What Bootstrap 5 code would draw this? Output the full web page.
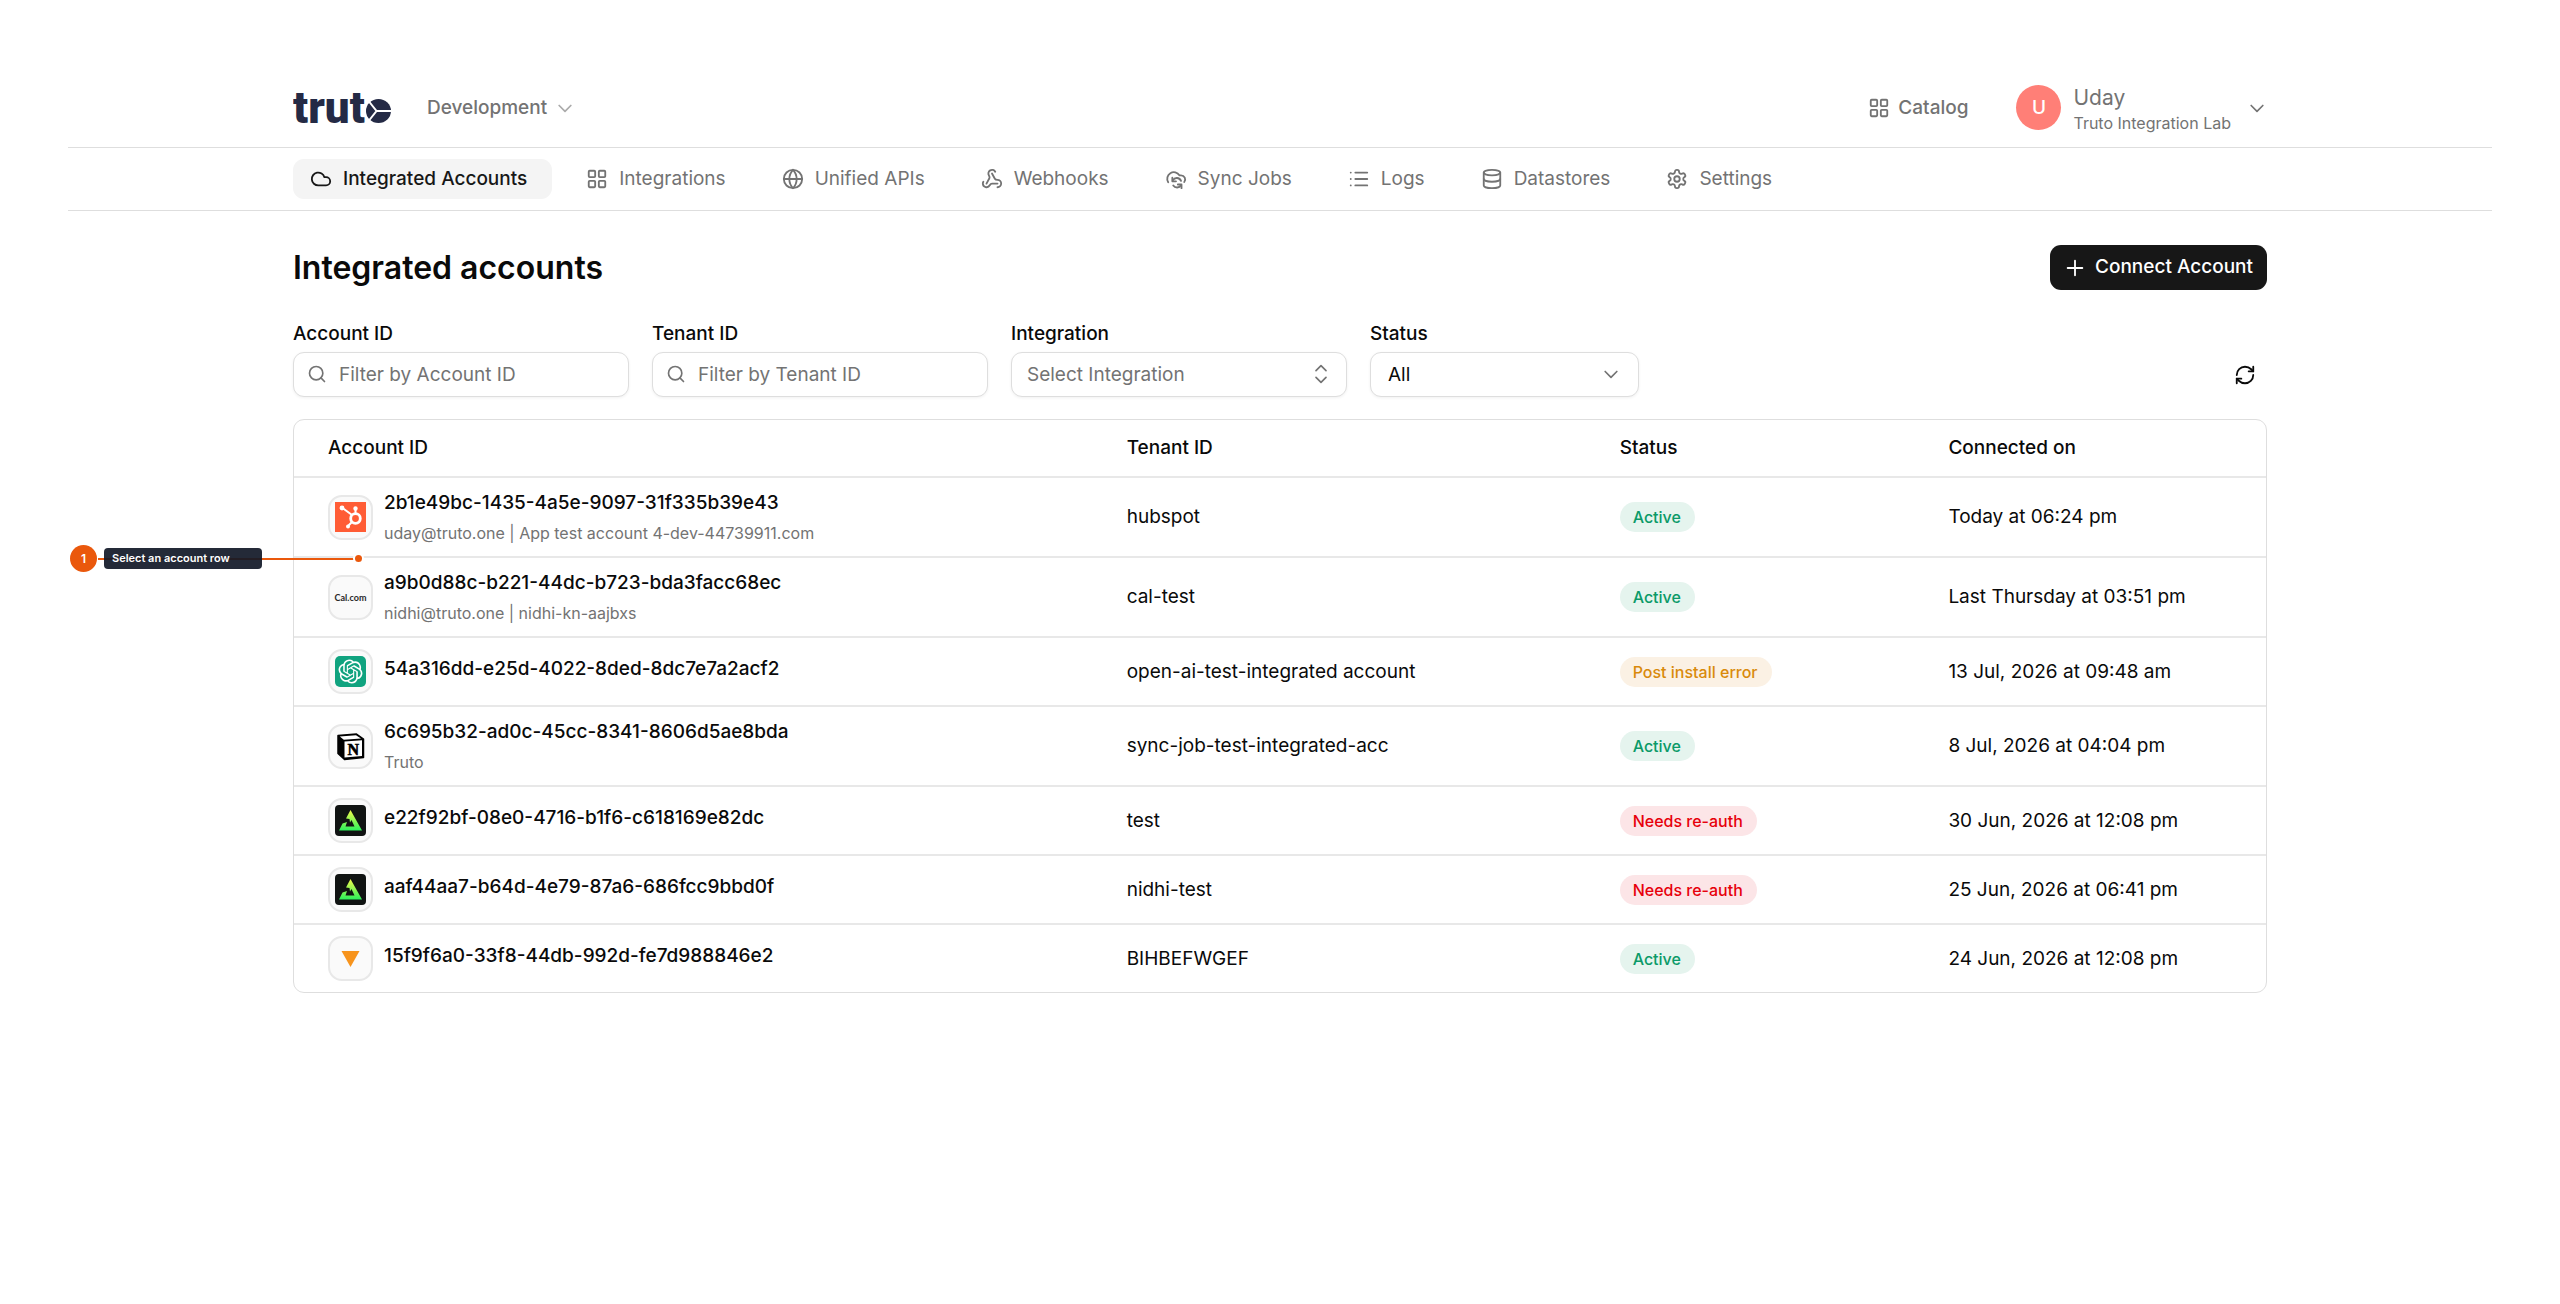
<!DOCTYPE html>
<html lang="en">
<head>
<meta charset="utf-8">
<meta name="viewport" content="width=device-width, initial-scale=1">
<title>Integrated accounts</title>
<link href="https://cdn.jsdelivr.net/npm/bootstrap@5.3.0/dist/css/bootstrap.min.css" rel="stylesheet">
<style>
  body { font-family: Inter, "Liberation Sans", sans-serif; font-size: 19px; line-height: 28px; color: #0a0a0a; background: #fff; }
  .shell { padding: 68px 68px 0; }
  .wrap { max-width: 1974px; margin: 0 auto; }
  .line-below { border-bottom: 1px solid #dedede; }
  .topbar { height: 79px; }
  .muted { color: #737373; }
  .ico { fill: none; stroke: currentColor; stroke-width: 2; stroke-linecap: round; stroke-linejoin: round; flex: none; width: 22px; height: 22px; }
  .ico-sm { width: 20px; height: 20px; }
  .faint { opacity: .6; }
  .plain { background: none; border: 0; padding: 0; color: #737373; }
  .brand text { font: 900 44px Roboto, "Liberation Sans", sans-serif; fill: #242a45; }
  .avatar { width: 45px; height: 45px; background: #ff7f77; color: #fff; font-weight: 500; }
  .person { font-size: 21px; line-height: 26px; padding-top: 4px; }
  .small-line { font-size: 16px; line-height: 24px; }
  .tabs { height: 62px; gap: 17px; }
  .tabs a { height: 40px; padding: 0 22px 0 17px; gap: 11px; border-radius: 11px; color: #737373; text-decoration: none; }
  .tabs a.on { padding-right: 25px; background: #f4f4f4; color: #171717; font-weight: 500; }
  .title-row { margin-top: 34px; }
  h1 { font-size: 32px; line-height: 45px; font-weight: 600; margin: 0; }
  .btn-dark-main { height: 45px; padding: 0 14px 0 14px; gap: 9px; background: #171717; color: #fff; border: 0; border-radius: 11px; font-weight: 500; font-size: 19px; }
  .btn-dark-main:hover { background: #333; color: #fff; }
  .filters { margin-top: 30px; gap: 23px; }
  .filters label { display: block; font-weight: 500; line-height: 28px; margin-bottom: 4px; }
  .fld { position: relative; width: 336px; color: #737373; }
  .fld-narrow { width: 269px; }
  .fld .form-control { appearance: none; height: 45px; padding: 0 15px; border: 1px solid #dedede; border-radius: 11px; font-size: 19px; line-height: 28px; color: #737373; background: #fff; box-shadow: 0 1px 3px rgba(0,0,0,.06); }
  .fld .form-control::placeholder { color: #737373; opacity: 1; }
  .fld .has-lead { padding-left: 45px; }
  .fld .picked { color: #0a0a0a; padding-left: 17px; }
  .lead-ico { position: absolute; left: 14px; top: 12px; }
  .tail-ico { position: absolute; right: 16px; top: 12px; }
  .fld-narrow .tail-ico { right: 18px; }
  .refresh { width: 45px; height: 45px; color: #0a0a0a; }
  .panel { position: relative; margin-top: 22px; border: 1px solid #dedede; border-radius: 11px; }
  .grid-table { width: 100%; table-layout: fixed; border-collapse: separate; border-spacing: 0; }
  .grid-table th { height: 58px; padding: 0 34px; font-weight: 500; border-bottom: 2px solid #e8e8e8; }
  .grid-table td { padding: 11px 34px; border-bottom: 2px solid #e8e8e8; vertical-align: middle; }
  .grid-table tr:last-child td { border-bottom: 0; }
  .tile { width: 45px; height: 45px; border: 2px solid #e8e8e8; border-radius: 14px; background: #fafafa; }
  .tile svg { width: 31px; height: 31px; }
  .cal { font: 700 9px Lato, sans-serif; color: #292929; }
  .acct { gap: 11px; }
  .acct-id { font-weight: 500; margin-bottom: 5px; }
  .acct-sub { font-size: 16px; line-height: 23px; color: #737373; }
  .pill { display: inline-block; height: 30px; line-height: 30px; padding: 0 14px 0 13px; border-radius: 15px; font-size: 16px; font-weight: 500; vertical-align: middle; }
  .pill-ok { color: #0b9a68; background: #e5f4ee; }
  .pill-warn { color: #d98a0b; background: #fbf1e4; }
  .pill-bad { color: #e7000b; background: #fce5e7; }
  /* callout laid over the table edge */
  .callout { position: absolute; left: -224px; top: 125px; width: 292px; height: 27px; }
  .callout .rule { position: absolute; left: 28px; right: 8px; top: 13px; height: 2px; background: #ea580c; }
  .callout .num { position: absolute; left: 0; top: 0; width: 27px; height: 27px; border-radius: 50%; background: #ea580c; color: #fff; font-size: 12px; font-weight: 600; }
  .callout .tip { position: absolute; left: 34px; top: 3px; width: 158px; height: 21px; padding-left: 8px; border-radius: 4px; background: rgba(17,24,39,.92); color: #fff; font-size: 11px; line-height: 21px; font-weight: 600; }
  .callout .dot { position: absolute; right: 0; top: 10px; width: 7px; height: 7px; border-radius: 50%; background: #ea580c; box-shadow: 0 0 0 2px #fff; }
</style>
</head>
<body>
<svg width="0" height="0" class="position-absolute" aria-hidden="true">
  <defs>
    <linearGradient id="lime" x1="0" y1="0" x2="0" y2="1"><stop offset="0" stop-color="#f4f94b"/><stop offset="1" stop-color="#2bf05a"/></linearGradient>
    <symbol id="tiles" viewBox="0 0 24 24"><rect x="3" y="3" width="7" height="7" rx="1"/><rect x="14" y="3" width="7" height="7" rx="1"/><rect x="14" y="14" width="7" height="7" rx="1"/><rect x="3" y="14" width="7" height="7" rx="1"/></symbol>
    <symbol id="down" viewBox="0 0 24 24"><path d="m5 9 7 7 7-7"/></symbol>
    <symbol id="find" viewBox="0 0 24 24"><circle cx="11" cy="11" r="8"/><path d="m21 21-4.3-4.3"/></symbol>
    <symbol id="tri" viewBox="0 0 31 31"><rect width="31" height="31" rx="4" y="0" fill="#101312"/><path d="M15.500 5 27 25.500H4L7.500 18.500L12 17L10.500 21.500H19.500L16.500 15L15 17.500L14.500 14L11 13.500Z" fill="url(#lime)"/></symbol>
  </defs>
</svg>

<div class="shell">
  <header class="line-below">
    <div class="wrap topbar d-flex align-items-center justify-content-between">
      <div class="d-flex align-items-center">
        <a href="#" class="brand d-block" aria-label="truto home">
          <svg class="d-block" width="98" height="60" viewBox="0 0 98 60">
            <text x="0" y="45">trut</text>
            <ellipse cx="85.500" cy="33" rx="12.500" ry="12" fill="#242a45"/>
            <path d="M74 21 83.500 33 74 45M83.500 33H99" fill="none" stroke="#fff" stroke-width="2"/>
          </svg>
        </a>
        <button class="plain d-flex align-items-center ms-4 ps-2" type="button"><span class="ms-1 fw-medium">Development</span>
          <svg class="ico ico-sm ms-2 faint"><use href="#down"/></svg></button>
      </div>
      <div class="d-flex align-items-center">
        <a href="#" class="muted text-decoration-none d-flex align-items-center fw-medium"><svg class="ico me-2"><use href="#tiles"/></svg>Catalog</a>
        <button class="plain d-flex align-items-center text-start ms-5" type="button">
          <span class="avatar rounded-circle d-flex align-items-center justify-content-center">U</span>
          <span class="ms-2 ps-1"><span class="person d-block">Uday</span><span class="small-line d-block">Truto Integration Lab</span></span>
          <svg class="ico ico-sm ms-3"><use href="#down"/></svg>
        </button>
      </div>
    </div>
  </header>

  <nav class="line-below">
    <div class="wrap tabs d-flex align-items-center">
      <a href="#" class="on d-flex align-items-center"><svg class="ico" viewBox="0 0 24 24"><path d="M17.500 19H9a7 7 0 1 1 6.710-9h1.790a4.500 4.500 0 1 1 0 9Z"/></svg>Integrated Accounts</a>
      <a href="#" class="d-flex align-items-center"><svg class="ico"><use href="#tiles"/></svg>Integrations</a>
      <a href="#" class="d-flex align-items-center"><svg class="ico" viewBox="0 0 24 24"><circle cx="12" cy="12" r="10"/><path d="M12 2a14.500 14.500 0 0 0 0 20 14.500 14.500 0 0 0 0-20M2 12h20"/></svg>Unified APIs</a>
      <a href="#" class="d-flex align-items-center"><svg class="ico" viewBox="0 0 24 24"><path d="M18 16.980h-5.990c-1.100 0-1.950.940-2.480 1.900A4 4 0 0 1 2 17c.010-.7.2-1.400.570-2"/><path d="m6 17 3.130-5.780c.530-.970.100-2.180-.5-3.100a4 4 0 1 1 6.890-4.060"/><path d="m12 6 3.130 5.730C15.660 12.700 16.900 13 18 13a4 4 0 0 1 0 8"/></svg>Webhooks</a>
      <a href="#" class="d-flex align-items-center"><svg class="ico" viewBox="0 0 24 24"><path d="M3.500 15.500A7 7 0 1 1 15.700 8h1.800a4.500 4.500 0 0 1 3.500 7.300"/><path d="M8 10.500v4h4"/><path d="M17.500 14a5 5 0 0 0-9-.5"/><path d="M18 22v-4h-4"/><path d="M9 19a5 5 0 0 0 8.500-.2"/></svg>Sync Jobs</a>
      <a href="#" class="d-flex align-items-center"><svg class="ico" viewBox="0 0 24 24"><path d="M8 5h13M8 12h13M8 19h13M3 5h.010M3 12h.010M3 19h.010"/></svg>Logs</a>
      <a href="#" class="d-flex align-items-center"><svg class="ico" viewBox="0 0 24 24"><ellipse cx="12" cy="5" rx="9" ry="3"/><path d="M3 5v14a9 3 0 0 0 18 0V5"/><path d="M3 12a9 3 0 0 0 18 0"/></svg>Datastores</a>
      <a href="#" class="d-flex align-items-center"><svg class="ico" viewBox="0 0 24 24"><path d="M12.220 2h-.440a2 2 0 0 0-2 2v.180a2 2 0 0 1-1 1.730l-.430.250a2 2 0 0 1-2 0l-.150-.080a2 2 0 0 0-2.730.730l-.220.380a2 2 0 0 0 .730 2.730l.150.100a2 2 0 0 1 1 1.720v.510a2 2 0 0 1-1 1.740l-.150.090a2 2 0 0 0-.730 2.730l.220.380a2 2 0 0 0 2.730.730l.150-.080a2 2 0 0 1 2 0l.430.250a2 2 0 0 1 1 1.730V20a2 2 0 0 0 2 2h.440a2 2 0 0 0 2-2v-.180a2 2 0 0 1 1-1.730l.430-.250a2 2 0 0 1 2 0l.150.080a2 2 0 0 0 2.730-.730l.220-.390a2 2 0 0 0-.730-2.730l-.150-.080a2 2 0 0 1-1-1.740v-.5a2 2 0 0 1 1-1.740l.150-.090a2 2 0 0 0 .730-2.730l-.220-.380a2 2 0 0 0-2.730-.730l-.150.080a2 2 0 0 1-2 0l-.430-.250a2 2 0 0 1-1-1.730V4a2 2 0 0 0-2-2z"/><circle cx="12" cy="12" r="3"/></svg>Settings</a>
    </div>
  </nav>

  <main class="wrap">
    <div class="title-row d-flex align-items-center justify-content-between">
      <h1>Integrated accounts</h1>
      <button class="btn btn-dark-main d-flex align-items-center" type="button"><svg class="ico" viewBox="0 0 24 24"><path d="M4 12h16M12 4v16"/></svg>Connect Account</button>
    </div>

    <form class="filters d-flex align-items-end">
      <div><label for="acc">Account ID</label>
        <div class="fld"><input id="acc" class="form-control has-lead" type="text" placeholder="Filter by Account ID"><svg class="ico ico-sm lead-ico"><use href="#find"/></svg></div></div>
      <div><label for="ten">Tenant ID</label>
        <div class="fld"><input id="ten" class="form-control has-lead" type="text" placeholder="Filter by Tenant ID"><svg class="ico ico-sm lead-ico"><use href="#find"/></svg></div></div>
      <div><label for="int">Integration</label>
        <div class="fld"><select id="int" class="form-control"><option>Select Integration</option></select><svg class="ico ico-sm tail-ico" viewBox="0 0 24 24"><path d="m6 16 6 6 6-6M6 8l6-6 6 6"/></svg></div></div>
      <div><label for="sta">Status</label>
        <div class="fld fld-narrow"><select id="sta" class="form-control picked"><option>All</option></select><svg class="ico ico-sm tail-ico"><use href="#down"/></svg></div></div>
      <button class="plain refresh ms-auto d-flex align-items-center justify-content-center" type="button" aria-label="Refresh"><svg class="ico" viewBox="0 0 24 24"><path d="M3 12a9 9 0 0 1 9-9 9.750 9.750 0 0 1 6.740 2.740L21 8"/><path d="M21 3v5h-5"/><path d="M21 12a9 9 0 0 1-9 9 9.750 9.750 0 0 1-6.740-2.740L3 16"/><path d="M8 16H3v5"/></svg></button>
    </form>

    <div class="panel">
      <table class="grid-table">
        <colgroup><col style="width:40.5%"><col style="width:25%"><col style="width:16.67%"><col></colgroup>
        <thead><tr><th scope="col">Account ID</th><th scope="col">Tenant ID</th><th scope="col">Status</th><th scope="col">Connected on</th></tr></thead>
        <tbody>
          <tr><td><div class="acct d-flex align-items-center"><span class="tile d-flex align-items-center justify-content-center"><svg viewBox="0 0 31 31"><rect width="31" height="30" fill="#ff5c35"/><g fill="none" stroke="#fff"><circle cx="20.500" cy="16.500" r="4.800" stroke-width="2.800"/><path d="M20.500 11.500V6.500M17 13 7.500 6M17 20l-4 4" stroke-width="2"/></g><g fill="#fff"><circle cx="20.500" cy="6.500" r="2.200"/><circle cx="7" cy="6" r="2.400"/><circle cx="13" cy="24.500" r="2"/></g></svg></span><div><div class="acct-id">2b1e49bc-1435-4a5e-9097-31f335b39e43</div><div class="acct-sub">uday@truto.one | App test account 4-dev-44739911.com</div></div></div></td><td>hubspot</td><td><span class="pill pill-ok">Active</span></td><td>Today at 06:24 pm</td></tr>
          <tr><td><div class="acct d-flex align-items-center"><span class="tile cal d-flex align-items-center justify-content-center">Cal.com</span><div><div class="acct-id">a9b0d88c-b221-44dc-b723-bda3facc68ec</div><div class="acct-sub">nidhi@truto.one | nidhi-kn-aajbxs</div></div></div></td><td>cal-test</td><td><span class="pill pill-ok">Active</span></td><td>Last Thursday at 03:51 pm</td></tr>
          <tr><td><div class="acct d-flex align-items-center"><span class="tile d-flex align-items-center justify-content-center"><svg viewBox="0 0 31 31"><rect width="31" height="31" rx="5" fill="#10a37f"/><path transform="translate(3.500 3.500)" fill="#fff" d="M22.2819 9.8211a5.9847 5.9847 0 0 0-.5157-4.9108 6.0462 6.0462 0 0 0-6.5098-2.9A6.0651 6.0651 0 0 0 4.9807 4.1818a5.9847 5.9847 0 0 0-3.9977 2.9 6.0462 6.0462 0 0 0 .7427 7.0966 5.98 5.98 0 0 0 .511 4.9107 6.051 6.051 0 0 0 6.5146 2.9001A5.9847 5.9847 0 0 0 13.2599 24a6.0557 6.0557 0 0 0 5.7718-4.2058 5.9894 5.9894 0 0 0 3.9977-2.9001 6.0557 6.0557 0 0 0-.7475-7.0729zm-9.022 12.6081a4.4755 4.4755 0 0 1-2.8764-1.0408l.1419-.0804 4.7783-2.7582a.7948.7948 0 0 0 .3927-.6813v-6.7369l2.02 1.1686a.071.071 0 0 1 .038.052v5.5826a4.504 4.504 0 0 1-4.4945 4.4944zm-9.6607-4.1254a4.4708 4.4708 0 0 1-.5346-3.0137l.142.0852 4.783 2.7582a.7712.7712 0 0 0 .7806 0l5.8428-3.3685v2.3324a.0804.0804 0 0 1-.0332.0615L9.74 19.9502a4.4992 4.4992 0 0 1-6.1408-1.6464zM2.3408 7.8956a4.485 4.485 0 0 1 2.3655-1.9728V11.6a.7664.7664 0 0 0 .3879.6765l5.8144 3.3543-2.0201 1.1685a.0757.0757 0 0 1-.071 0l-4.8303-2.7865A4.504 4.504 0 0 1 2.3408 7.872zm16.5963 3.8558L13.1038 8.364 15.1192 7.2a.0757.0757 0 0 1 .071 0l4.8303 2.7913a4.4944 4.4944 0 0 1-.6765 8.1042v-5.6772a.79.79 0 0 0-.407-.667zm2.0107-3.0231l-.142-.0852-4.7735-2.7818a.7759.7759 0 0 0-.7854 0L9.409 9.2297V6.8974a.0662.0662 0 0 1 .0284-.0615l4.8303-2.7866a4.4992 4.4992 0 0 1 6.6802 4.66zM8.3065 12.863l-2.02-1.1638a.0804.0804 0 0 1-.038-.0567V6.0742a4.4992 4.4992 0 0 1 7.3757-3.4537l-.142.0805L8.704 5.459a.7948.7948 0 0 0-.3927.6813zm1.0976-2.3654l2.602-1.4998 2.6069 1.4998v2.9994l-2.5974 1.4997-2.6067-1.4997Z"/></svg></span><div class="acct-id">54a316dd-e25d-4022-8ded-8dc7e7a2acf2</div></div></td><td>open-ai-test-integrated account</td><td><span class="pill pill-warn">Post install error</span></td><td>13 Jul, 2026 at 09:48 am</td></tr>
          <tr><td><div class="acct d-flex align-items-center"><span class="tile d-flex align-items-center justify-content-center"><svg viewBox="0 0 31 31"><path d="M3 4.500 21.500 3 28.500 8V26.500L9.500 28.500 3 22.500Z" fill="#000" stroke="#000" stroke-width="1.500" stroke-linejoin="round"/><path d="M4.800 5.600 21 4.300 26 7.600 8.800 8.800Z" fill="#fff"/><path d="M9.500 10.500 27 9.300V25L9.500 26.600Z" fill="#fff"/><text x="18.200" y="23.500" text-anchor="middle" font-family="Liberation Serif, serif" font-weight="700" font-size="16" stroke="#000" stroke-width=".6">N</text></svg></span><div><div class="acct-id">6c695b32-ad0c-45cc-8341-8606d5ae8bda</div><div class="acct-sub">Truto</div></div></div></td><td>sync-job-test-integrated-acc</td><td><span class="pill pill-ok">Active</span></td><td>8 Jul, 2026 at 04:04 pm</td></tr>
          <tr><td><div class="acct d-flex align-items-center"><span class="tile d-flex align-items-center justify-content-center"><svg><use href="#tri"/></svg></span><div class="acct-id">e22f92bf-08e0-4716-b1f6-c618169e82dc</div></div></td><td>test</td><td><span class="pill pill-bad">Needs re-auth</span></td><td>30 Jun, 2026 at 12:08 pm</td></tr>
          <tr><td><div class="acct d-flex align-items-center"><span class="tile d-flex align-items-center justify-content-center"><svg><use href="#tri"/></svg></span><div class="acct-id">aaf44aa7-b64d-4e79-87a6-686fcc9bbd0f</div></div></td><td>nidhi-test</td><td><span class="pill pill-bad">Needs re-auth</span></td><td>25 Jun, 2026 at 06:41 pm</td></tr>
          <tr><td><div class="acct d-flex align-items-center"><span class="tile d-flex align-items-center justify-content-center"><svg viewBox="0 0 31 31"><path d="M6.500 8h18l-9 16Z" fill="#f7941d"/></svg></span><div class="acct-id">15f9f6a0-33f8-44db-992d-fe7d988846e2</div></div></td><td>BIHBEFWGEF</td><td><span class="pill pill-ok">Active</span></td><td>24 Jun, 2026 at 12:08 pm</td></tr>
        </tbody>
      </table>
      <div class="callout"><span class="rule"></span><span class="num d-flex align-items-center justify-content-center">1</span><span class="tip">Select an account row</span><span class="dot"></span></div>
    </div>
  </main>
</div>
<script src="https://cdn.jsdelivr.net/npm/bootstrap@5.3.0/dist/js/bootstrap.bundle.min.js"></script>
</body>
</html>
